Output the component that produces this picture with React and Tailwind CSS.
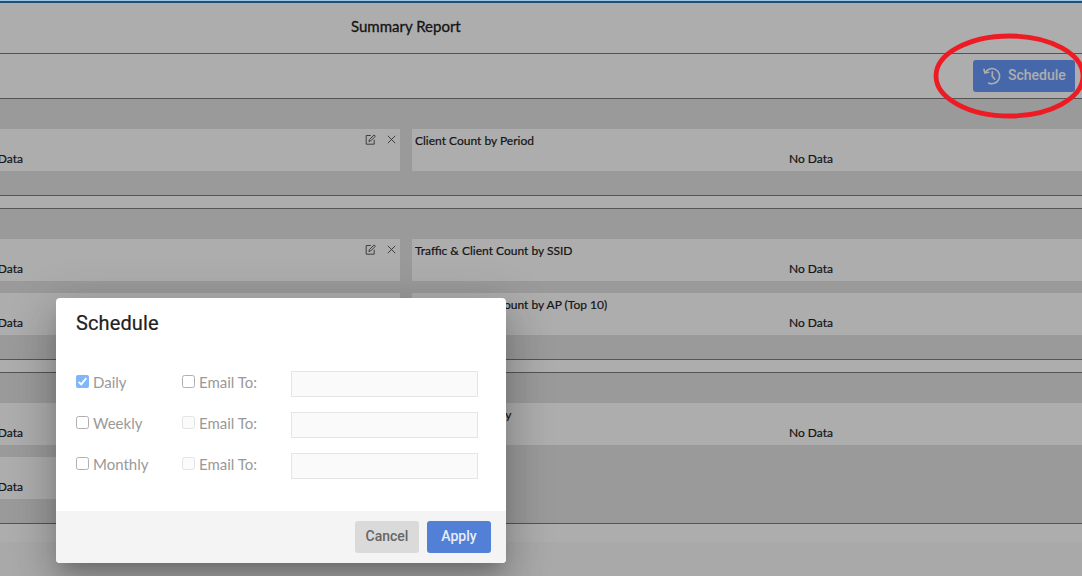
import React from "react";

const sections = [
  { rows: [["", "Client Count by Period"]] },
  {
    rows: [
      ["", "Traffic & Client Count by SSID"],
      ["", "Traffic & Client Count by AP (Top 10)"],
    ],
  },
  { rows: [["", "Wireless Category"], [""]] },
];

const schedules = [
  { name: "Daily", checked: true, canEmail: true },
  { name: "Weekly", checked: false, canEmail: false },
  { name: "Monthly", checked: false, canEmail: false },
];

const HistoryIcon = () => (
  <svg
    className="w-[18px] h-[18px]"
    viewBox="0 0 18 18"
    fill="none"
    stroke="currentColor"
    strokeWidth="1.6"
    strokeLinecap="round"
    strokeLinejoin="round"
  >
    <path d="M2.2 5.6A7.6 7.6 0 1 1 5.6 16" />
    <path d="M1 2.4L1.8 6L5.6 5.3" />
    <path d="M9.3 4.8V9.4L11.8 12.2" />
  </svg>
);

const EditIcon = () => (
  <svg
    className="w-[11px] h-[11px]"
    viewBox="0 0 11 11"
    fill="none"
    stroke="currentColor"
    strokeWidth="0.8"
    strokeLinejoin="round"
  >
    <path d="M5.8 1.5H1.2V10.2H9.2V5.8" />
    <path d="M3.9 7.5L4.4 5.6L9.1 0.9L10.4 2.2L5.7 6.9Z" />
  </svg>
);

const CloseIcon = () => (
  <svg
    className="w-[9px] h-[9px]"
    viewBox="0 0 9 9"
    fill="none"
    stroke="currentColor"
    strokeWidth="0.8"
  >
    <path d="M0.8 0.8L8.2 8.2M8.2 0.8L0.8 8.2" />
  </svg>
);

const ReportCard = ({ title, editable }) => (
  <div className="h-[42px] bg-white px-[3px] pt-[3px] overflow-hidden [-webkit-text-stroke:0.2px]">
    <div className="flex h-[18px] items-center justify-between">
      <span className="leading-[18px]">{title}</span>
      {editable && (
        <span className="flex items-center gap-[11px] pr-[1.5px] pb-[3px] text-[#333]">
          <EditIcon />
          <CloseIcon />
        </span>
      )}
    </div>
    <p className="text-center leading-[18px]">No Data</p>
  </div>
);

const ReportSection = ({ rows, first }) => (
  <section
    className={`border-y border-[#7c7c7c] bg-[#e4e4e4] pt-[30px] pb-6 ${first ? "" : "mt-3"}`}
  >
    <div className="grid w-[1608px] -ml-[398px] grid-cols-2 gap-3">
      {rows.map((row, r) =>
        row.map((title, c) => (
          <ReportCard key={`${r}-${c}`} title={title} editable={c === 0} />
        ))
      )}
    </div>
  </section>
);

const Checkbox = ({ checked, disabled }) => {
  if (checked) {
    return (
      <span className="flex w-[13px] h-[13px] items-center justify-center rounded-[2px] bg-[#80b6fa]">
        <svg className="w-[13px] h-[13px]" viewBox="0 0 13 13" fill="none">
          <path d="M2.6 6.8L5.2 9.4L10.3 3.2" stroke="#fff" strokeWidth="1.9" />
        </svg>
      </span>
    );
  }
  return (
    <span
      className={`w-[13px] h-[13px] rounded-[2.5px] border ${
        disabled ? "border-[#e3e3e3] bg-[#fbfbfb]" : "border-[#b0b0b0] bg-white"
      }`}
    />
  );
};

const ScheduleRow = ({ name, checked, canEmail }) => (
  <div className="flex h-[26px] items-center">
    <label className="flex w-[106px] items-center gap-1">
      <span className="pb-[5px] flex">
        <Checkbox checked={checked} />
      </span>
      <span className="pb-1">{name}</span>
    </label>
    <label className="flex w-[109px] items-center gap-1">
      <span className="pb-[5px] flex">
        <Checkbox disabled={!canEmail} />
      </span>
      <span className="pb-1">Email To:</span>
    </label>
    <div className="w-[187px] h-[26px] border border-[#e5e5e5] bg-[#fafafa]" />
  </div>
);

const ScheduleDialog = () => (
  <div className="absolute left-[56px] top-[298px] flex w-[450px] h-[265px] flex-col overflow-hidden rounded-[4px] bg-white shadow-[0_11px_15px_-7px_rgba(0,0,0,0.2),0_24px_38px_3px_rgba(0,0,0,0.14),0_9px_46px_8px_rgba(0,0,0,0.12)]">
    <h2 className="px-5 pt-3 font-[Roboto,sans-serif] text-[20px] leading-[26px] tracking-[0.12px] text-[#212121] [-webkit-text-stroke:0.2px]">
      Schedule
    </h2>
    <div className="flex flex-1 flex-col gap-[15px] px-5 pt-[35px] text-[15px] text-[#999]">
      {schedules.map((s) => (
        <ScheduleRow key={s.name} {...s} />
      ))}
    </div>
    <div className="flex h-[52px] items-center justify-end gap-2 bg-[#f4f4f4] pr-[15px] font-[Roboto,sans-serif] text-[14px] font-medium">
      <button className="h-8 w-16 rounded-[3px] bg-[#dadada] pb-0.5 text-[#666]">
        Cancel
      </button>
      <button className="h-8 w-16 rounded-[3px] bg-[#5280d6] pb-0.5 text-[#e8edf8]">
        Apply
      </button>
    </div>
  </div>
);

const App = () => {
  return (
    <div className="relative w-[1082px] h-[576px] overflow-hidden bg-[#fafafa] font-[Lato,sans-serif] text-[12px] text-[#222]">
      <div className="h-[542px] bg-white">
        <div className="h-[53px] border-t-3 border-[#3675ab]">
          <h1 className="pt-[13px] pl-[351px] text-[15px] leading-5 [-webkit-text-stroke:0.3px]">
            Summary Report
          </h1>
        </div>
        <div className="flex h-[45px] items-center justify-end border-t border-[#7c7c7c] pr-[7px]">
          <button className="flex w-[102px] h-8 items-center gap-[7px] rounded-[3px] bg-[#6799fb] pl-[10px] font-[Roboto,sans-serif] text-[14px] font-medium text-white">
            <HistoryIcon />
            <span className="pb-0.5">Schedule</span>
          </button>
        </div>
        {sections.map((s, i) => (
          <ReportSection key={i} rows={s.rows} first={i === 0} />
        ))}
      </div>

      <div className="absolute inset-0 bg-black/32" />
      <div className="absolute inset-x-0 top-0 h-px bg-[#9cc4e4]" />

      <ScheduleDialog />

      <svg
        className="absolute left-[930px] top-[30px] w-[152px] h-[92px]"
        viewBox="0 0 152 92"
        fill="none"
      >
        <ellipse cx="79.5" cy="46" rx="73.5" ry="40" stroke="#ed1c24" strokeWidth="4.8" />
      </svg>
    </div>
  );
};

export default App;
